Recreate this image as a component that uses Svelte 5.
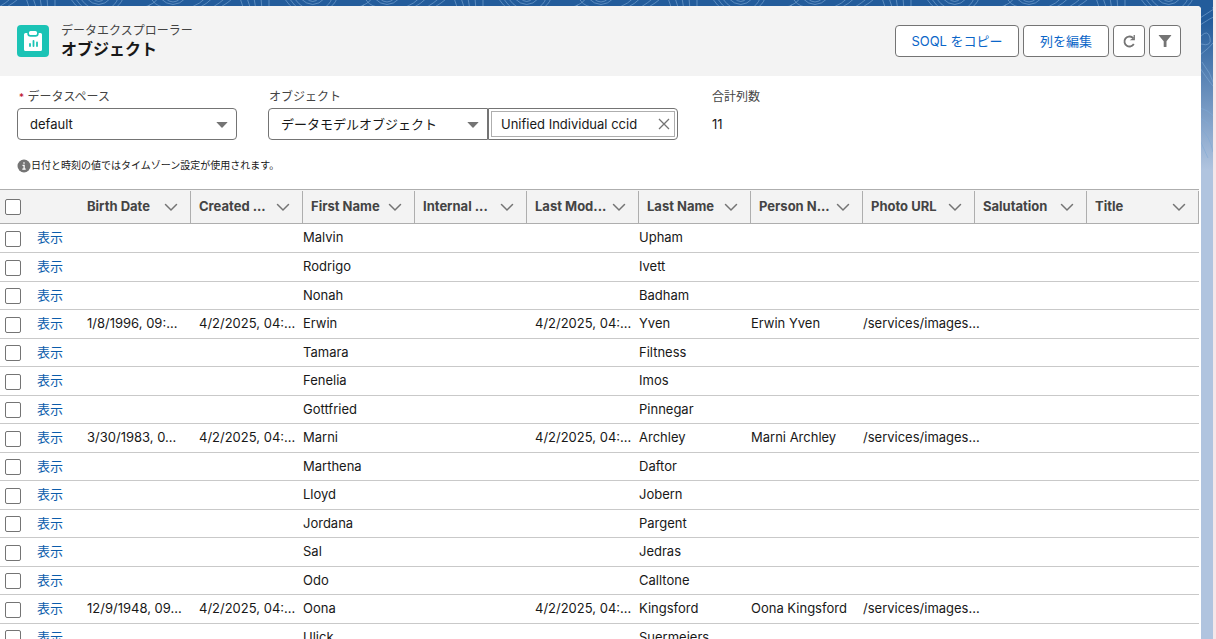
<script>
	const columns = [
		{ label: "Birth Date", key: "birth", date: true },
		{ label: "Created ...", key: "created", date: true },
		{ label: "First Name", key: "first" },
		{ label: "Internal ...", key: "internal" },
		{ label: "Last Mod...", key: "modified", date: true },
		{ label: "Last Name", key: "last" },
		{ label: "Person N...", key: "person" },
		{ label: "Photo URL", key: "photo" },
		{ label: "Salutation", key: "salutation" },
		{ label: "Title", key: "title" },
	];

	const stamp = "4/2/2025, 04:...";
	const photo = "/services/images...";

	const rows = [
		{ first: "Malvin", last: "Upham" },
		{ first: "Rodrigo", last: "Ivett" },
		{ first: "Nonah", last: "Badham" },
		{ birth: "1/8/1996, 09:...", created: stamp, first: "Erwin", modified: stamp, last: "Yven", person: "Erwin Yven", photo },
		{ first: "Tamara", last: "Filtness" },
		{ first: "Fenelia", last: "Imos" },
		{ first: "Gottfried", last: "Pinnegar" },
		{ birth: "3/30/1983, 0...", created: stamp, first: "Marni", modified: stamp, last: "Archley", person: "Marni Archley", photo },
		{ first: "Marthena", last: "Daftor" },
		{ first: "Lloyd", last: "Jobern" },
		{ first: "Jordana", last: "Pargent" },
		{ first: "Sal", last: "Jedras" },
		{ first: "Odo", last: "Calltone" },
		{ birth: "12/9/1948, 09...", created: stamp, first: "Oona", modified: stamp, last: "Kingsford", person: "Oona Kingsford", photo },
		{ first: "Ulick", last: "Suermeiers" },
	];

	let selected = $state(rows.map(() => false));
	let all = $derived(selected.every(Boolean));

	const toggle_all = () => {
		selected = rows.map(() => !all);
	};
</script>

<div class="page">
	<svg class="contours" aria-hidden="true">
		<defs>
			<pattern id="waves" width="214" height="240" patternUnits="userSpaceOnUse">
				<g fill="none" stroke="#7fa8d4" stroke-opacity="0.6">
					<path d="M-4 9Q6 3 14-4M2 10Q14 3 22-4M26-2L30 10M33-2L37 10M40-2L42 10M47-2L48 10M55-2V10" />
					<path d="M70-2Q74 5 84 12M75-2Q79 5 89 12M80-2Q84 4 92 9M86-2Q99 11 111-2M92-2Q99 5 105-2M107 10Q116 5 118-2M112 10Q121 5 123-2" />
					<path d="M142 8Q155 4 158-2M151-2Q154 5 163 7M160-2Q173 11 186-2M165-2Q173 6 181-2M190 8Q200 4 208-4M197 9Q207 4 215-4" />
					<path d="M130 18L150 5M130 25Q140 18 150 14M131 36Q138 29 140 38T131 44M130 55Q150 40 150 28M130 68Q142 86 150 94M132 62Q150 85 144 106M130 108Q146 112 150 130M130 118Q144 124 148 144M130 128Q140 136 143 152M130 140L138 158" />
				</g>
			</pattern>
		</defs>
		<rect width="100%" height="170" fill="url(#waves)" />
	</svg>

	<main class="card">
		<header class="header">
			<svg class="logo" viewBox="0 0 32 32" aria-hidden="true">
				<rect width="32" height="32" rx="4" fill="#1bc3b5" />
				<path d="M8.500 8h1.800v.5a3.200 3.200 0 0 0 3.200 3.200h5a3.200 3.200 0 0 0 3.200-3.200V8h1.800a1.500 1.500 0 0 1 1.500 1.500v15a1.500 1.500 0 0 1-1.500 1.500h-15A1.500 1.500 0 0 1 7 24.500v-15A1.500 1.500 0 0 1 8.500 8z" fill="#fff" />
				<rect x="12" y="6" width="8" height="4" rx="1.500" fill="#fff" />
				<path d="M13 19v2M16.500 16v5M20 17.500v3.500" stroke="#1bc3b5" stroke-width="1.800" stroke-linecap="round" />
			</svg>
			<div class="heading">
				<p>データエクスプローラー</p>
				<h1>オブジェクト</h1>
			</div>
			<div class="actions">
				<button class="soql">SOQL をコピー</button>
				<button class="edit">列を編集</button>
				<button class="icon" aria-label="更新">
					<svg width="14" height="14" viewBox="0 0 14 14">
						<path d="M11.800 10A5 5 0 1 1 10.500 3.500L11.500 4.500" fill="none" stroke="#747474" stroke-width="1.800" />
						<path d="M12.900 1v5.200H7.700L10.300 4.600H11.600V1z" fill="#747474" />
					</svg>
				</button>
				<button class="icon" aria-label="フィルター">
					<svg width="14" height="14" viewBox="0 0 14 14">
						<path d="M1 1h12q.6 0 .2.600L8.500 7.200V12.500q0 .5-.5.500H6.200q-.5 0-.5-.5V7.200L.8 1.600Q.4 1 1 1z" fill="#747474" />
					</svg>
				</button>
			</div>
		</header>

		<section class="filters">
			<div class="field space">
				<label for="space"><span class="required">*</span> データスペース</label>
				<div class="select">
					<select id="space"><option>default</option></select>
					<svg width="12" height="8" viewBox="0 0 12 8"><path d="M1 1h10q.8 0 .3.600L6.500 6.500q-.5.5-1 0L.7 1.600Q.2 1 1 1z" fill="#747474" /></svg>
				</div>
			</div>
			<div class="field object">
				<label for="object">オブジェクト</label>
				<div class="combo">
					<div class="select">
						<select id="object"><option>データモデルオブジェクト</option></select>
						<svg width="12" height="8" viewBox="0 0 12 8"><path d="M1 1h10q.8 0 .3.600L6.500 6.500q-.5.5-1 0L.7 1.600Q.2 1 1 1z" fill="#747474" /></svg>
					</div>
					<div class="lookup">
						<div class="pill">
							<span>Unified Individual ccid</span>
							<button aria-label="削除">
								<svg width="12" height="12" viewBox="0 0 12 12"><path d="M1 1l10 10M11 1L1 11" stroke="#747474" stroke-width="1.300" /></svg>
							</button>
						</div>
					</div>
				</div>
			</div>
			<div class="field">
				<span class="caption">合計列数</span>
				<span class="total">11</span>
			</div>
		</section>

		<p class="notice">
			<svg width="14" height="14" viewBox="0 0 14 14" aria-hidden="true">
				<circle cx="7" cy="7" r="6.500" fill="#747474" />
				<path d="M7 3.200v1.600M5.500 6.300h1.600v4M5.300 10.200h3.400" stroke="#fff" stroke-width="1.300" fill="none" />
			</svg>
			<span>日付と時刻の値ではタイムゾーン設定が使用されます。</span>
		</p>

		<div class="table">
			<table>
				<colgroup>
					<col class="check" />
					<col class="show" />
					{#each columns as column}
						<col />
					{/each}
				</colgroup>
				<thead>
					<tr>
						<th><input type="checkbox" aria-label="すべて選択" checked={all} onchange={toggle_all} /></th>
						<th></th>
						{#each columns as column}
							<th>
								<div class="column">
									<span>{column.label}</span>
									<button aria-label="{column.label} メニュー">
										<svg width="14" height="14" viewBox="0 0 14 14"><path d="M1.500 4.500L7 10l5.500-5.500" fill="none" stroke="#747474" stroke-width="1.500" stroke-linecap="round" /></svg>
									</button>
								</div>
							</th>
						{/each}
					</tr>
				</thead>
				<tbody>
					{#each rows as row, i}
						<tr>
							<td class="tick"><input type="checkbox" aria-label="{row.first} {row.last}" bind:checked={selected[i]} /></td>
							<td class="inset"><a href="#{row.first}">表示</a></td>
							{#each columns as column}
								<td class:inset={column.date}>{row[column.key] ?? ""}</td>
							{/each}
						</tr>
					{/each}
				</tbody>
			</table>
		</div>
	</main>
</div>

<style>
	:global(body) {
		background: #f6e6e8;
	}

	.page {
		position: relative;
		height: 100vh;
		box-sizing: border-box;
		margin-right: 3px;
		padding: 6px 12px 0 0;
		overflow: hidden;
		background: linear-gradient(#235c9b 0, #235c9b 20px, #b0c4df 170px);
		font-family: Inter, "Noto Sans CJK JP", sans-serif;
		font-size: 13px;
		color: #181818;
	}

	.contours {
		position: absolute;
		inset: 0;
		width: 100%;
		height: 170px;
	}

	.card {
		position: relative;
		height: 100%;
		overflow: hidden;
		background: #fff;
		border-radius: 0 4px 0 0;
	}

	.header {
		display: flex;
		align-items: flex-start;
		gap: 12px;
		height: 70px;
		box-sizing: border-box;
		padding: 19px 20px 0 17px;
		background: #f3f3f3;
	}

	.logo {
		width: 32px;
		height: 32px;
	}

	.heading {
		flex: 1;
		margin-top: -4px;
	}

	.heading p {
		margin: 0;
		font-size: 12px;
		line-height: 20px;
		color: #444;
	}

	.heading h1 {
		margin: 0;
		font-size: 16px;
		font-weight: 700;
		line-height: 16px;
	}

	button {
		padding: 0;
		font: inherit;
		cursor: pointer;
	}

	.actions {
		display: flex;
		gap: 4px;
	}

	.actions button {
		display: flex;
		align-items: center;
		justify-content: center;
		height: 32px;
		background: #fff;
		border: 1px solid #747474;
		border-radius: 4px;
		color: #0b66c8;
	}

	.actions .soql {
		width: 124px;
		padding-bottom: 2px;
	}

	.actions .edit {
		width: 86px;
		padding-bottom: 2px;
	}

	.actions .icon {
		width: 32px;
	}

	.filters {
		display: flex;
		padding: 12px 17px 0;
	}

	.field {
		display: flex;
		flex-direction: column;
	}

	.space {
		width: 220px;
		margin-right: 31px;
	}

	.object {
		width: 410px;
		margin-right: 34px;
	}

	label,
	.caption {
		height: 20px;
		font-size: 12px;
		line-height: 18px;
		color: #444;
	}

	.space label {
		padding-left: 2px;
	}

	.object label {
		padding-left: 1px;
	}

	.required {
		font-size: 10px;
		color: #ba0517;
	}

	.total {
		line-height: 32px;
	}

	.select {
		position: relative;
	}

	.select svg {
		position: absolute;
		top: 13px;
		right: 9px;
		pointer-events: none;
	}

	select {
		display: block;
		width: 100%;
		height: 32px;
		padding: 0 24px 0 12px;
		appearance: none;
		font: inherit;
		color: #181818;
		background: #fff;
		border: 1px solid #747474;
		border-radius: 4px;
	}

	.combo {
		display: flex;
	}

	.combo .select {
		width: 220px;
	}

	.combo select {
		border-radius: 4px 0 0 4px;
	}

	.lookup {
		flex: 1;
		height: 32px;
		box-sizing: border-box;
		padding: 2px;
		border: 1px solid #747474;
		border-radius: 0 4px 4px 0;
	}

	.pill {
		display: flex;
		align-items: center;
		justify-content: space-between;
		height: 100%;
		box-sizing: border-box;
		padding: 0 4px 0 9px;
		border: 1px solid #aeaeae;
	}

	.pill button,
	.column button {
		display: flex;
		background: none;
		border: 0;
	}

	.notice {
		display: flex;
		align-items: center;
		height: 14px;
		margin: 19px 17px 16px;
		font-size: 10px;
	}

	.notice span {
		padding-bottom: 3px;
	}

	.table {
		margin-right: 2px;
		border-top: 1px solid #aeaeae;
	}

	table {
		width: 100%;
		table-layout: fixed;
		border-collapse: separate;
		border-spacing: 0;
	}

	.check {
		width: 29px;
	}

	.show {
		width: 50px;
	}

	th {
		height: 33px;
		padding: 0;
		background: #f3f3f3;
		border-bottom: 1px solid #aeaeae;
		text-align: left;
		color: #444;
	}

	th:first-child {
		padding-left: 5px;
	}

	.column {
		display: flex;
		align-items: center;
		justify-content: space-between;
		height: 32px;
		padding: 0 12px 0 8px;
		border-right: 1px solid #aeaeae;
	}

	.column span {
		padding-bottom: 2px;
		white-space: nowrap;
	}

	td {
		height: 28px;
		box-sizing: border-box;
		padding: 0 0 2px;
		white-space: nowrap;
		line-height: 20px;
		border-bottom: 1px solid #c9c9c9;
	}

	td.inset {
		padding-left: 8px;
	}

	td.tick {
		padding: 1px 0 0 5px;
	}

	tr:first-child td,
	tr:nth-child(even) td {
		height: 29px;
	}

	a {
		color: #0b5cab;
		text-decoration: none;
	}

	input {
		display: block;
		width: 16px;
		height: 16px;
		margin: 0;
		appearance: none;
		background: #fff;
		border: 1px solid #747474;
		border-radius: 2px;
	}

	input:checked {
		background: #0176d3;
	}
</style>
